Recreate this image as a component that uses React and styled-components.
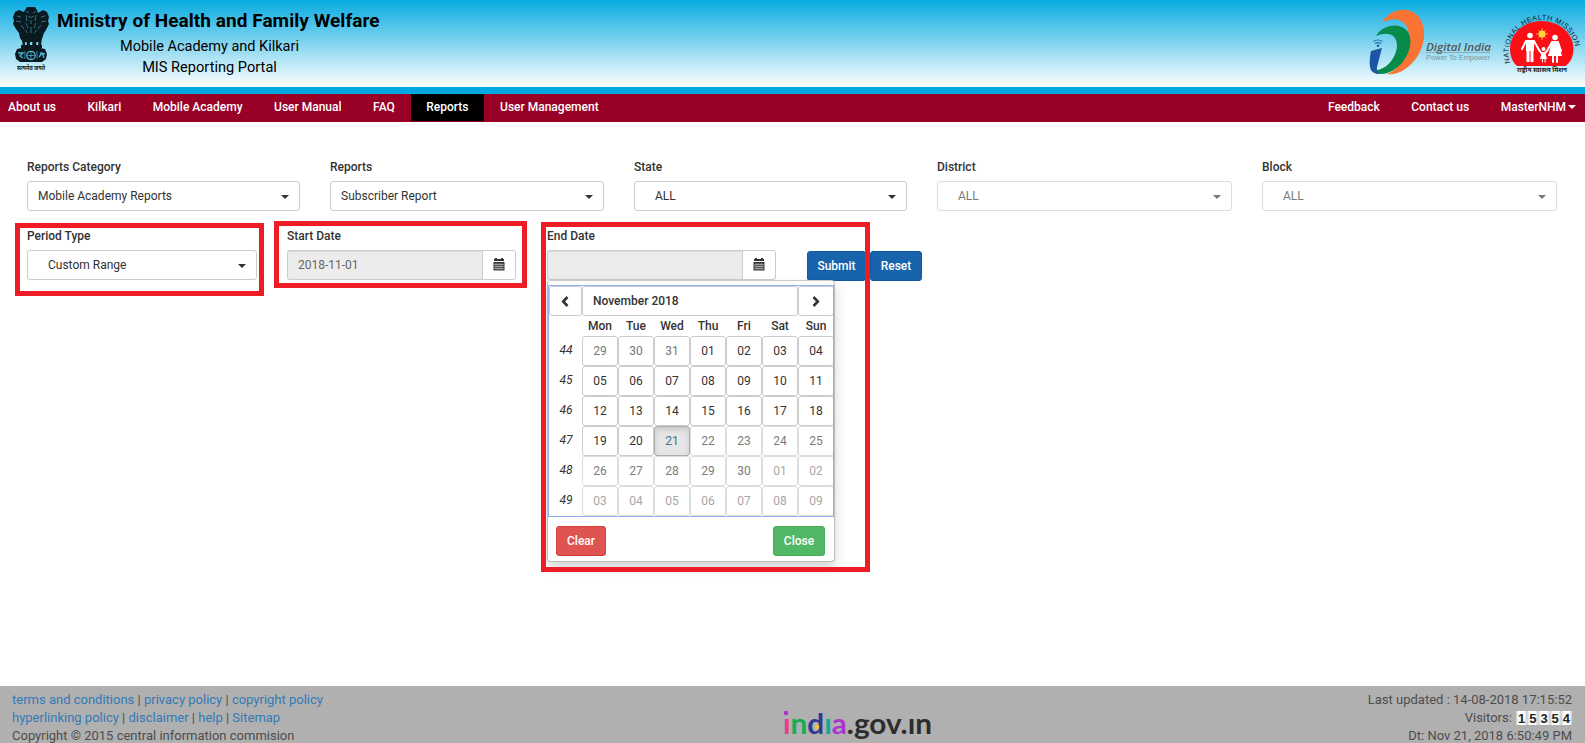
import React from 'react';
import styled, { createGlobalStyle } from 'styled-components';

const Global = createGlobalStyle`
  *{box-sizing:border-box}
  html,body{margin:0;padding:0;background:#fff;overflow:hidden}
  body{font:400 12px/17px Roboto,"Liberation Sans",sans-serif;color:#333}
  a{color:inherit;text-decoration:none}
  button{font:inherit;color:inherit;cursor:pointer}
`;
const Page = styled.div`position:relative;height:743px;display:flex;flex-direction:column;`;
const Header = styled.header`
  height:94px;flex:none;display:flex;justify-content:space-between;
  border-bottom:7px solid #00a7e0;background:linear-gradient(#08abe1,#fff);color:#000;
`;
const Brand = styled.div`display:flex;padding:7px 0 0 12px;gap:6px;svg{flex:none}`;
const Titles = styled.div`width:324px;white-space:nowrap;`;
const Title = styled.h1`margin:1px 0 3px;font-size:19px;font-weight:700;line-height:26px;letter-spacing:0.05px;`;
const Sub = styled.div`width:305px;text-align:center;font-size:${p => p.$size}px;line-height:20px;`;
const Logos = styled.div`display:flex;svg{display:block}`;

const Nav = styled.nav`height:28px;flex:none;background:#990026;color:#fff;font-weight:500;display:flex;justify-content:space-between;`;
const NavGroup = styled.div`display:flex;`;
const NavItem = styled.a`
  height:27px;padding:0 ${p => p.$pr ?? 15.75}px 1px ${p => p.$pl ?? 15.75}px;line-height:25px;white-space:nowrap;
  display:flex;align-items:center;gap:2px;background:${p => (p.$active ? '#000' : 'transparent')};
`;
const Caret = styled.span`
  border:4px solid transparent;border-top-color:currentColor;border-bottom:0;flex:none;
`;

const Form = styled.main`flex:1;padding:37px 27px 0;`;
const Row = styled.div`display:flex;gap:30px;margin-bottom:${p => p.$mb || 0}px;`;
const Field = styled.div`width:${p => p.$w}px;flex:none;`;
const Label = styled.label`display:block;font-weight:500;line-height:17px;margin-bottom:5px;`;
const Select = styled.div`
  height:30px;border:1px solid #ccc;border-radius:3px;display:flex;align-items:center;justify-content:space-between;
  padding:1px 10px 0 ${p => p.$pl || 10}px;opacity:${p => (p.$disabled ? 0.65 : 1)};background:#fff;
`;
const InputGroup = styled.div`display:flex;height:30px;margin-right:1px;`;
const Input = styled.div`
  flex:1;border:1px solid #ccc;border-right:0;border-radius:3px 0 0 3px;background:#ececec;
  box-shadow:inset 0 1px 1px rgba(0,0,0,.075);line-height:29px;padding-left:10px;color:#666;
`;
const Addon = styled.button`
  width:34px;border:1px solid #ccc;border-radius:0 3px 3px 0;background:#fff;padding:0 1px 2px 0;
  display:flex;align-items:center;justify-content:center;
`;
const Actions = styled.div`display:flex;gap:4px;margin-top:23px;`;
const Action = styled.button`
  width:${p => p.$w}px;height:30px;border:1px solid #1059a3;border-radius:3px;background:#1763ac;color:#fff;font-weight:500;padding:0;
`;

const Popup = styled.section`
  position:absolute;left:547px;top:280px;width:288px;height:282px;background:#fff;
  border:1px solid #bbb;border-top-color:#ccc;border-radius:4px;box-shadow:0 6px 12px rgba(0,0,0,.175);padding-top:4px;
`;
const Grid = styled.div`
  border:1px solid #8db2f0;height:232px;display:grid;width:286px;overflow:hidden;
  grid-template-columns:33px repeat(7,36px);grid-template-rows:30px 20px repeat(6,30px);
`;
const Step = styled.button`background:#fff;border:1px solid #ccc;border-radius:3px;padding:0 1px 0 0;display:grid;place-items:center;`;
const Month = styled(Step)`grid-column:span 6;font-weight:500;justify-content:start;padding-left:10px;`;
const DayName = styled.div`font-weight:500;text-align:center;line-height:20px;`;
const Week = styled.div`font-style:italic;text-align:center;line-height:28px;padding-left:1px;`;
const Day = styled.button`
  background:${p => (p.$today ? '#e6e6e6' : '#fff')};border:1px solid ${p => (p.$today ? '#adadad' : '#ccc')};
  border-radius:3px;padding:0;line-height:26px;opacity:${p => (p.$disabled ? 0.65 : 1)};
  color:${p => (p.$today ? '#46708c' : p.$muted ? '#777' : '#333')};
  box-shadow:${p => (p.$today ? 'inset 0 3px 5px rgba(0,0,0,.125)' : 'none')};
`;
const PopupFoot = styled.div`display:flex;justify-content:space-between;padding:9px 9px 0 8px;`;
const SmallBtn = styled.button`
  height:30px;width:${p => p.$w}px;border:1px solid ${p => p.$line};background:${p => p.$bg};color:#fff;border-radius:3px;font-weight:500;padding:0;
`;
const Highlight = styled.div`
  position:absolute;border:5px solid #ee1c25;pointer-events:none;
  left:${p => p.$x}px;top:${p => p.$y}px;width:${p => p.$w}px;height:${p => p.$h}px;
`;

const Footer = styled.footer`
  height:57px;flex:none;background:#b0b0b0;font-size:13px;line-height:18px;padding:5px 13px 0 12px;color:#4d4d4d;
  display:grid;grid-template-columns:770px 152px 1fr;grid-template-rows:52px;white-space:nowrap;
`;
const Links = styled.div`a{color:#337ab7}`;
const Stats = styled.div`text-align:right;`;
const Counter = styled.span`display:inline-flex;vertical-align:top;margin:2px 0 0 1px;background:#ddd;`;
const Digit = styled.b`
  width:11.2px;height:14px;font:700 13px/15px "Liberation Sans",sans-serif;text-align:center;color:#222;
  background:linear-gradient(90deg,#ccc,#fff 25%,#fff 75%,#ccc);
`;
const GovLogo = styled.svg`margin-top:12px;overflow:visible;`;

const Emblem = () => (
  <svg width="39" height="65" viewBox="0 0 39 65" fill="#0b1a20">
    <path d="M13 3l2-3h8l2 3 1 3 5-3 4 2 2 5-1 4 1 3-3 6-2 3-2 6-3 3H11l-3-4-1-5-3-4-3-5 1-3-1-4 2-5 4-2 5 2z" />
    <path d="M9 27h3l1 6v7h-2zM14 29h4v11h-3zM21 29h4l-1 11h-4zM27 28h3l-1 12h-3z" />
    <path d="M9 38h21v3H9z" />
    <path d="M5 42q14-4 28 0l2 5-1 5-4 3H8l-4-3-1-5z" />
    <g fill="none" stroke="#4cb6d6" strokeWidth=".9">
      <path d="M14 4l3 2M24 4l-3 2M16 9l3 1.500 3-1.500M14 8l1 6M24 8l-1 6M5 9l4 1M33 9l-4 1M4 14l5 1M34 14l-5 1M9 18l3 4M29 18l-3 4M14 16l2 5M24 16l-2 5M19 13v4M19 20v6M13 23l3 3M25 23l-3 3" opacity=".6" />
      <path d="M6 46h5l-3 3 3 2M28 46l5 1M27 50l3-4 2 5" strokeWidth="1.300" />
      <circle cx="19" cy="48.500" r="4.200" strokeWidth="1.200" />
      <path d="M19 45v7M15.500 48.500h7M13 44v8M25 44v8" opacity=".8" />
    </g>
    <text x="19" y="62.500" textAnchor="middle" fontFamily='"Noto Sans","Liberation Sans",sans-serif' fontSize="6.500" fontWeight="700" textLength="28" lengthAdjust="spacingAndGlyphs">सत्यमेव जयते</text>
  </svg>
);

const DigitalIndia = () => (
  <svg width="125" height="80" viewBox="1368 0 125 80">
    <path d="M1382 22C1391 9 1407 6 1417 15c13 13 7 39-8 51-8 7-16 9-22 8 22-7 31-47 12-54-5-2-11 0-17 2z" fill="#f97432" />
    <path d="M1376 36c7-12 25-14 32-4 7 12-2 32-16 39-8 4-15 4-20-1 12 2 24-10 25-24 0-11-8-15-21-10z" fill="#088b4a" />
    <path d="M1371 51l11-3-5 19q-1 5 3 7c-10 0-12-6-9-23z" fill="#1c55a5" />
    <g fill="none" stroke="#1c78ad" strokeWidth="1.200"><path d="M1373.500 41.500q4.500-3 9 0M1375 43.700q3-2 6 0" /></g>
    <circle cx="1378" cy="45.700" r="1.300" fill="#1c55a5" />
    <text x="1426" y="51" fontFamily='"Open Sans",sans-serif' fontSize="10" fontWeight="600" fontStyle="italic" fill="#555" textLength="65" lengthAdjust="spacingAndGlyphs">Digital India</text>
    <path d="M1426 52.500h64" stroke="#888" strokeWidth=".6" />
    <text x="1426" y="59.500" fontFamily='"Liberation Sans",sans-serif' fontSize="6.500" fill="#7b959d" textLength="64" lengthAdjust="spacingAndGlyphs">Power To Empower</text>
  </svg>
);

const HealthMission = () => (
  <svg width="92" height="80" viewBox="1493 0 92 80">
    <defs><path id="arc" d="M1510.100 63A33.600 33.600 0 1 1 1574.500 63" /></defs>
    <text fontFamily='"Liberation Sans",sans-serif' fontSize="7.300" fill="#123" letterSpacing=".42"><textPath href="#arc">NATIONAL HEALTH MISSION</textPath></text>
    <path d="M1517 66q-7-6-7-17c0-16 14-28 31.500-28s32 12 32 28q0 11-8 17z" fill="#fb0f17" />
    <circle cx="1542" cy="34" r="3.500" fill="#ffdf3d" />
    <path d="M1542 28v12M1536 34h12M1538 30l8 8M1546 30l-8 8" stroke="#ffc83c" strokeWidth=".8" />
    <g fill="#fff" stroke="#fff" strokeLinecap="round">
      <circle cx="1530" cy="35.500" r="2.800" stroke="none" /><circle cx="1555" cy="37.500" r="2.800" stroke="none" /><circle cx="1543.500" cy="49" r="2" stroke="none" />
      <path d="M1526 40h8v11h-8z" stroke="none" /><path d="M1528 50v12M1532 50v12" strokeWidth="3" strokeLinecap="butt" />
      <path d="M1526 41l-4 8M1534 41l5 9 3 4M1552 42l-5 9-3 3M1558 42l3 9" fill="none" strokeWidth="2" />
      <path d="M1552 41h6l4 15h-14z" stroke="none" /><path d="M1553 55v7M1557 55v7" strokeWidth="2" />
      <path d="M1542 52h3l2 7h-7z" stroke="none" /><path d="M1542.500 58v4M1545 58v4" strokeWidth="1" />
    </g>
    <text x="1542" y="71.500" textAnchor="middle" fontFamily='"Noto Sans",sans-serif' fontSize="6" fontWeight="700" fill="#222" textLength="50" lengthAdjust="spacingAndGlyphs">राष्ट्रीय स्वास्थ्य मिशन</text>
  </svg>
);

const Calendar = () => (
  <svg width="12" height="13" viewBox="0 0 12 13">
    <path d="M1 1h1V0h2v1h4V0h2v1h1v2H1z" fill="#333" />
    <path d="M.5 4h11v8.500H.5z" fill="#333" />
    <path d="M3 5v7M5 5v7M7 5v7M9 5v7M1 6.500h10M1 8.500h10M1 10.500h10" stroke="#fff" strokeWidth=".4" />
  </svg>
);
const Chevron = ({ right }) => (
  <svg width="8" height="11" viewBox="0 0 8 11" fill="none" stroke="#333" strokeWidth="2.600">
    <path d={right ? 'M1.500 1l4.300 4.500L1.500 10' : 'M6.500 1L2.200 5.500 6.500 10'} />
  </svg>
);

const Picker = ({ label, value, w, pl, disabled }) => (
  <Field $w={w}><Label>{label}</Label><Select $pl={pl} $disabled={disabled}>{value}<Caret /></Select></Field>
);
const DateField = ({ label, value }) => (
  <Field $w={230}><Label>{label}</Label><InputGroup><Input>{value}</Input><Addon><Calendar /></Addon></InputGroup></Field>
);

const days = Array.from({ length: 42 }, (_, i) => {
  const d = new Date(2018, 9, 29 + i);
  return { text: String(d.getDate()).padStart(2, '0'), muted: d.getMonth() !== 10, today: i === 23, disabled: i > 23 };
});

export default function App() {
  return (
    <Page>
      <Global />
      <Header>
        <Brand>
          <Emblem />
          <Titles>
            <Title>Ministry of Health and Family Welfare</Title>
            <Sub $size={14.5}>Mobile Academy and Kilkari</Sub>
            <Sub $size={14.6}>MIS Reporting Portal</Sub>
          </Titles>
        </Brand>
        <Logos><DigitalIndia /><HealthMission /></Logos>
      </Header>
      <Nav>
        <NavGroup>
          <NavItem $pl={8}>About us</NavItem><NavItem>Kilkari</NavItem><NavItem>Mobile Academy</NavItem>
          <NavItem>User Manual</NavItem><NavItem>FAQ</NavItem><NavItem $active>Reports</NavItem><NavItem>User Management</NavItem>
        </NavGroup>
        <NavGroup>
          <NavItem>Feedback</NavItem><NavItem>Contact us</NavItem><NavItem $pr={9}>MasterNHM<Caret /></NavItem>
        </NavGroup>
      </Nav>
      <Form>
        <Row $mb={17}>
          <Picker label="Reports Category" value="Mobile Academy Reports" w={273} />
          <Picker label="Reports" value="Subscriber Report" w={274} />
          <Picker label="State" value="ALL" w={273} pl={20} />
          <Picker label="District" value="ALL" w={295} pl={20} disabled />
          <Picker label="Block" value="ALL" w={295} pl={20} disabled />
        </Row>
        <Row>
          <Picker label="Period Type" value="Custom Range" w={230} pl={20} />
          <DateField label="Start Date" value="2018-11-01" />
          <DateField label="End Date" value="" />
          <Actions><Action $w={59}>Submit</Action><Action $w={52}>Reset</Action></Actions>
        </Row>
      </Form>
      <Footer>
        <Links>
          <div><a>terms and conditions</a> | <a>privacy policy</a> | <a>copyright policy</a></div>
          <div><a>hyperlinking policy</a> | <a>disclaimer</a> | <a>help</a> | <a>Sitemap</a></div>
          <div>Copyright © 2015 central information commision</div>
        </Links>
        <GovLogo width="152" height="40" viewBox="0 0 152 40">
          <text x="1" y="31" fontFamily="Lato,sans-serif" fontWeight="700" fontSize="28" textLength="149" lengthAdjust="spacingAndGlyphs">
            <tspan fill="#e83e8c">ı</tspan><tspan fill="#13ad55">n</tspan><tspan fill="#2f3b91">d</tspan><tspan fill="#10a99a">ı</tspan><tspan fill="#ac34d4">a</tspan><tspan fill="#2d2d2d">.gov.ın</tspan>
          </text>
          <circle cx="4" cy="10" r="2.300" fill="#ac34d4" /><circle cx="35" cy="24" r="2.300" fill="#f7c43a" />
        </GovLogo>
        <Stats>
          <div>Last updated : 14-08-2018 17:15:52</div>
          <div>Visitors: <Counter>{'15354'.split('').map((n, i) => <Digit key={i}>{n}</Digit>)}</Counter></div>
          <div>Dt: Nov 21, 2018 6:50:49 PM</div>
        </Stats>
      </Footer>
      <Popup>
        <Grid>
          <Step><Chevron /></Step><Month>November 2018</Month><Step><Chevron right /></Step>
          <span />{['Mon', 'Tue', 'Wed', 'Thu', 'Fri', 'Sat', 'Sun'].map(d => <DayName key={d}>{d}</DayName>)}
          {[44, 45, 46, 47, 48, 49].map((w, r) => (
            <React.Fragment key={w}>
              <Week>{w}</Week>
              {days.slice(r * 7, r * 7 + 7).map((d, i) => <Day key={i} $muted={d.muted} $today={d.today} $disabled={d.disabled}>{d.text}</Day>)}
            </React.Fragment>
          ))}
        </Grid>
        <PopupFoot><SmallBtn $w={50} $bg="#df5350" $line="#d43f3a">Clear</SmallBtn><SmallBtn $w={52} $bg="#51b866" $line="#44ae55">Close</SmallBtn></PopupFoot>
      </Popup>
      <Highlight $x={15} $y={223} $w={249} $h={73} />
      <Highlight $x={274} $y={221} $w={253} $h={67} />
      <Highlight $x={541} $y={222} $w={329} $h={350} />
    </Page>
  );
}
